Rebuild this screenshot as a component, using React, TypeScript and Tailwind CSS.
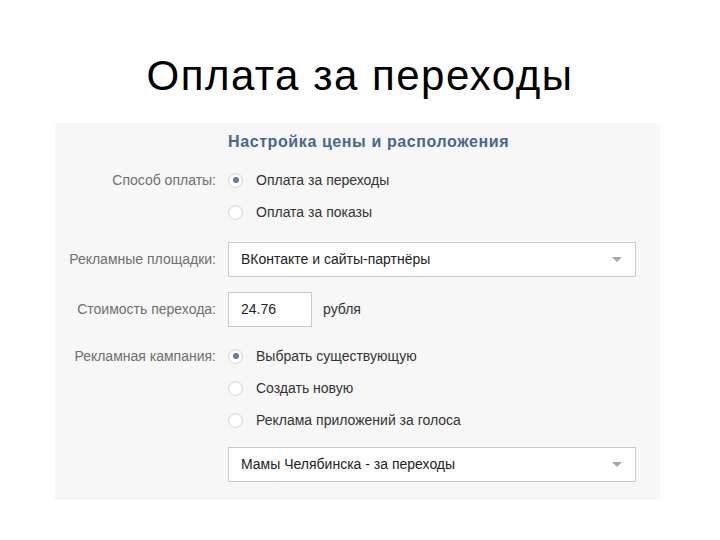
const font = { fontFamily: '"Liberation Sans", Arial, sans-serif' };

function Radio({ checked, label }: { checked?: boolean; label: string }) {
  return (
    <div className="flex items-center h-[32px]">
      <span className="w-[15px] h-[15px] rounded-full border border-[#d2d5d9] bg-white flex items-center justify-center shadow-[inset_0_1px_1px_rgba(0,0,0,0.06)]">
        {checked && <span className="w-[6px] h-[6px] rounded-full bg-[#5b7ea8]" />}
      </span>
      <span className="ml-[13px] text-[14px] text-[#333]">{label}</span>
    </div>
  );
}

function Row({ label, children }: { label?: string; children: React.ReactNode }) {
  return (
    <div className="flex items-center">
      <div className="w-[161px] shrink-0 text-right text-[14px] text-[#6f6f6f]">{label}</div>
      <div className="ml-[12px] flex-1">{children}</div>
    </div>
  );
}

function Select({ value }: { value: string }) {
  return (
    <div className="h-[35px] w-[408px] bg-white border border-[#c9c9c9] flex items-center justify-between pl-[12px] pr-[13px]">
      <span className="text-[14px] text-[#222]">{value}</span>
      <svg width="10" height="5" viewBox="0 0 10 5">
        <path d="M0 0 L10 0 L5 5 Z" fill="#aaaaaa" />
      </svg>
    </div>
  );
}

export default function App() {
  return (
    <div className="w-[720px] h-[540px] bg-white overflow-hidden" style={font}>
      <h1 className="pt-[52px] text-center text-[42px] leading-[48px] tracking-[1.5px] text-black">Оплата за переходы</h1>

      <div className="ml-[55px] mt-[23px] w-[605px] h-[377px] bg-[#f7f7f7] pt-[9px]">
        <Row>
          <div className="h-[20px] flex items-center text-[16px] font-bold tracking-[0.6px] text-[#45688e]">
            Настройка цены и расположения
          </div>
        </Row>

        <div className="mt-[12px]">
          <Row label="Способ оплаты:">
            <Radio checked label="Оплата за переходы" />
          </Row>
          <Row>
            <Radio label="Оплата за показы" />
          </Row>
        </div>

        <div className="mt-[14px]">
          <Row label="Рекламные площадки:">
            <Select value="ВКонтакте и сайты-партнёры" />
          </Row>
        </div>

        <div className="mt-[15px]">
          <Row label="Стоимость перехода:">
            <div className="flex items-center">
              <div className="h-[35px] w-[84px] bg-white border border-[#c9c9c9] flex items-center pl-[12px] text-[14px] text-[#222]">
                24.76
              </div>
              <span className="ml-[11px] text-[14px] text-[#333]">рубля</span>
            </div>
          </Row>
        </div>

        <div className="mt-[13px]">
          <Row label="Рекламная кампания:">
            <Radio checked label="Выбрать существующую" />
          </Row>
          <Row>
            <Radio label="Создать новую" />
          </Row>
          <Row>
            <Radio label="Реклама приложений за голоса" />
          </Row>
        </div>

        <div className="mt-[11px]">
          <Row>
            <Select value="Мамы Челябинска - за переходы" />
          </Row>
        </div>
      </div>
    </div>
  );
}
